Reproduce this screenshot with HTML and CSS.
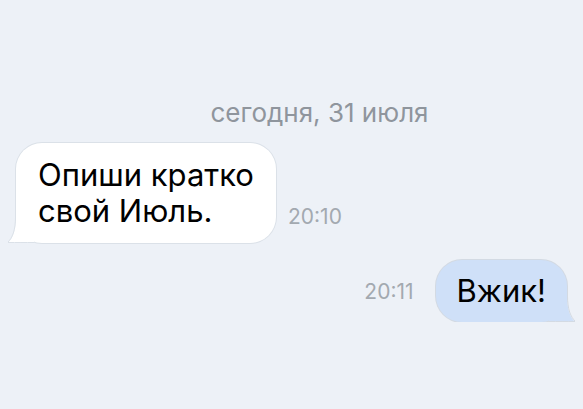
FILE: index.html
```html
<!DOCTYPE html>
<html lang="ru">
<head>
    <meta charset="UTF-8">
    <meta name="viewport" content="width=device-width, initial-scale=1.0">
    <title>Чат</title>
    <link rel="stylesheet" href="styles.css">
</head>
<body>
    <div class="chat">
        <div class="date">сегодня, 31 июля</div>

        <div class="row incoming">
            <div class="bubble">
                Опиши кратко<br>свой Июль.
                <svg class="tail" width="26" height="26" viewBox="0 0 26 26">
                    <path d="M8 0 C8 13 5 21 0 26 C9 26 17 25 26 26 L26 0 Z" fill="#fff"/>
                    <path d="M7.5 0 C7.5 13 4.5 21 -0.5 25.5 C9 25.5 17 25.5 26 25.5" fill="none" stroke="#dbe1e8" stroke-width="1"/>
                </svg>
            </div>
            <span class="time">20:10</span>
        </div>

        <div class="row outgoing">
            <span class="time">20:11</span>
            <div class="bubble">
                Вжик!
                <svg class="tail" width="26" height="26" viewBox="0 0 26 26">
                    <path d="M18 0 C18 13 21 21 26 26 C17 26 9 25 0 26 L0 0 Z" fill="#cfe0f8"/>
                    <path d="M18.5 0 C18.5 13 21.5 21 26.5 25.5 C17 25.5 9 25.5 0 25.5" fill="none" stroke="#d3dae3" stroke-width="1"/>
                </svg>
            </div>
        </div>
    </div>
</body>
</html>
```

FILE: styles.css
```css
body {
    margin: 0;
    background-color: #edf1f7;
    font-family: Inter, "Liberation Sans", Arial, sans-serif;
    color: #000;
}

.chat {
    padding-top: 98px;
    display: flex;
    flex-direction: column;
}

.date {
    text-align: center;
    font-size: 26px;
    line-height: 30px;
    color: #8f959d;
    padding-left: 56px;
}

.row {
    display: flex;
    align-items: flex-end;
}

.bubble {
    position: relative;
    font-size: 31px;
    line-height: 36px;
    padding: 14px 22px;
    border-radius: 26px;
}

.tail {
    position: absolute;
    bottom: 0;
}

.time {
    font-size: 21px;
    color: #a3a9b0;
}

.incoming {
    margin-top: 15px;
    padding-left: 16px;
}

    .incoming .bubble {
        width: 216px;
        background-color: #fff;
        box-shadow: 0 0 0 1px #dbe1e8;
    }

    .incoming .tail {
        left: -8px;
    }

    .incoming .time {
        margin-left: 12px;
        margin-bottom: 14px;
    }

.outgoing {
    margin-top: 17px;
    justify-content: flex-end;
    padding-right: 16px;
}

    .outgoing .bubble {
        padding: 13px 21px;
        background-color: #cfe0f8;
        box-shadow: 0 0 0 1px #d3dae3;
    }

    .outgoing .tail {
        right: -8px;
    }

    .outgoing .time {
        margin-right: 22px;
        margin-bottom: 18px;
    }
```
